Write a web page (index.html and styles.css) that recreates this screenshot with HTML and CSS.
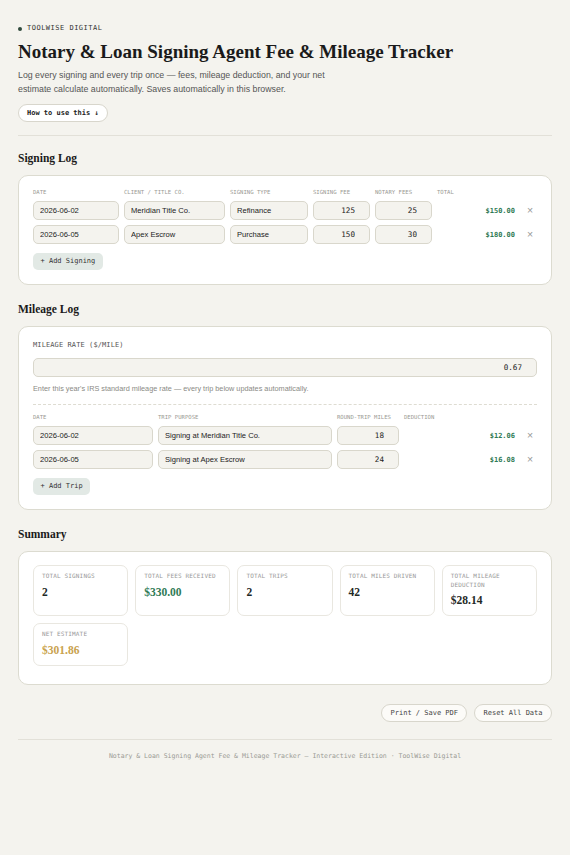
FILE: index.html
```html
<!DOCTYPE html>
<html lang="en">
<head>
  <meta charset="UTF-8">
  <meta name="viewport" content="width=device-width, initial-scale=1.0">
  <title>Notary &amp; Loan Signing Agent Fee &amp; Mileage Tracker</title>
  <link rel="stylesheet" href="styles.css">
</head>
<body>
  <div class="page">
    <header>
      <div class="eyebrow"><span class="dot"></span>TOOLWISE DIGITAL</div>
      <h1>Notary &amp; Loan Signing Agent Fee &amp; Mileage Tracker</h1>
      <p class="intro">Log every signing and every trip once — fees, mileage deduction, and your net estimate calculate automatically. Saves automatically in this browser.</p>
      <button class="how-btn">How to use this ↓</button>
    </header>

    <hr class="rule">

    <section class="section first">
      <h2>Signing Log</h2>
      <div class="card">
        <div class="log-grid signings">
          <div class="col-head">Date</div>
          <div class="col-head">Client / Title Co.</div>
          <div class="col-head">Signing Type</div>
          <div class="col-head">Signing Fee</div>
          <div class="col-head">Notary Fees</div>
          <div class="col-head">Total</div>
          <div></div>

          <input class="field" type="text" value="2026-06-02">
          <input class="field" type="text" value="Meridian Title Co.">
          <input class="field" type="text" value="Refinance">
          <input class="field num" type="text" value="125">
          <input class="field num" type="text" value="25">
          <div class="line-total">$150.00</div>
          <button class="remove">×</button>

          <input class="field" type="text" value="2026-06-05">
          <input class="field" type="text" value="Apex Escrow">
          <input class="field" type="text" value="Purchase">
          <input class="field num" type="text" value="150">
          <input class="field num" type="text" value="30">
          <div class="line-total">$180.00</div>
          <button class="remove">×</button>
        </div>
        <button class="add-btn">+ Add Signing</button>
      </div>
    </section>

    <section class="section">
      <h2>Mileage Log</h2>
      <div class="card">
        <label class="rate-label" for="rate">MILEAGE RATE ($/MILE)</label>
        <input class="field num rate" id="rate" type="text" value="0.67">
        <p class="helper">Enter this year's IRS standard mileage rate — every trip below updates automatically.</p>
        <div class="divider"></div>
        <div class="log-grid trips">
          <div class="col-head">Date</div>
          <div class="col-head">Trip Purpose</div>
          <div class="col-head">Round-Trip Miles</div>
          <div class="col-head">Deduction</div>
          <div></div>

          <input class="field" type="text" value="2026-06-02">
          <input class="field" type="text" value="Signing at Meridian Title Co.">
          <input class="field num" type="text" value="18">
          <div class="line-total">$12.06</div>
          <button class="remove">×</button>

          <input class="field" type="text" value="2026-06-05">
          <input class="field" type="text" value="Signing at Apex Escrow">
          <input class="field num" type="text" value="24">
          <div class="line-total">$16.08</div>
          <button class="remove">×</button>
        </div>
        <button class="add-btn">+ Add Trip</button>
      </div>
    </section>

    <section class="section">
      <h2>Summary</h2>
      <div class="card summary">
        <div class="stats">
          <div class="stat">
            <div class="stat-label">TOTAL SIGNINGS</div>
            <div class="stat-value">2</div>
          </div>
          <div class="stat">
            <div class="stat-label">TOTAL FEES RECEIVED</div>
            <div class="stat-value green">$330.00</div>
          </div>
          <div class="stat">
            <div class="stat-label">TOTAL TRIPS</div>
            <div class="stat-value">2</div>
          </div>
          <div class="stat">
            <div class="stat-label">TOTAL MILES DRIVEN</div>
            <div class="stat-value">42</div>
          </div>
          <div class="stat">
            <div class="stat-label">TOTAL MILEAGE DEDUCTION</div>
            <div class="stat-value">$28.14</div>
          </div>
          <div class="stat">
            <div class="stat-label">NET ESTIMATE</div>
            <div class="stat-value gold">$301.86</div>
          </div>
        </div>
      </div>
    </section>

    <div class="actions">
      <button class="pill">Print / Save PDF</button>
      <button class="pill">Reset All Data</button>
    </div>

    <hr class="rule footer-rule">
    <footer>Notary &amp; Loan Signing Agent Fee &amp; Mileage Tracker — Interactive Edition · ToolWise Digital</footer>
  </div>
</body>
</html>
```

FILE: styles.css
```css
body {
  margin: 0;
  background: #f4f3ee;
  font-family: "Liberation Sans", Arial, sans-serif;
  color: #1a1a1a;
}
.page {
  max-width: 534px;
  margin: 0 auto;
  padding: 24px 18px 40px;
}
.eyebrow {
  display: flex;
  align-items: center;
  gap: 5px;
  font: 7px/9px "DejaVu Sans Mono", monospace;
  letter-spacing: 0.5px;
  color: #333;
}
.dot {
  width: 4px;
  height: 4px;
  border-radius: 50%;
  background: #2f4a3c;
}
h1 {
  margin: 7px 0 0;
  font: bold 19px/23px "Liberation Serif", serif;
}
.intro {
  max-width: 330px;
  margin: 5px 0 0;
  font-size: 8.8px;
  line-height: 14px;
  color: #555;
}
.how-btn {
  margin-top: 8px;
  height: 18px;
  padding: 0 8px;
  border: 1px solid #d8d6cc;
  border-radius: 999px;
  background: #fff;
  font: bold 7px "DejaVu Sans Mono", monospace;
  color: #222;
  cursor: pointer;
}
.rule {
  margin: 13px 0 0;
  border: 0;
  border-top: 1px solid #e2e0d8;
}
.section {
  margin-top: 17.5px;
}
.section.first {
  margin-top: 15px;
}
h2 {
  margin: 0 0 10px;
  font: bold 11.5px/14px "Liberation Serif", serif;
}
.card {
  background: #fff;
  border: 1px solid #dcdbd0;
  border-radius: 10px;
  padding: 13px 14px 14px;
}
.card.summary {
  padding-bottom: 18.5px;
}
.log-grid {
  display: grid;
  gap: 5px;
  align-items: center;
}
.signings {
  grid-template-columns: 86px 101px 78px 57px 57px 1fr 14px;
}
.trips {
  grid-template-columns: 120px 174px 62px 1fr 14px;
}
.col-head {
  font: 5.6px/7px "DejaVu Sans Mono", monospace;
  text-transform: uppercase;
  color: #9a9a94;
}
.field {
  box-sizing: border-box;
  width: 100%;
  height: 19px;
  padding: 0 6px;
  border: 1px solid #d9d7cc;
  border-radius: 5px;
  background: #f4f3ee;
  font: 7.6px "Liberation Sans", Arial, sans-serif;
  color: #222;
}
.field.num {
  text-align: right;
  padding-right: 14px;
  font-family: "DejaVu Sans Mono", monospace;
}
.line-total {
  text-align: right;
  padding-right: 3px;
  font: bold 7px "DejaVu Sans Mono", monospace;
  color: #2f7a55;
}
.remove {
  padding: 0;
  border: 0;
  background: none;
  font: 10.5px/1 "Liberation Sans", Arial, sans-serif;
  color: #999;
  cursor: pointer;
}
.add-btn {
  display: block;
  margin-top: 8.5px;
  height: 17px;
  padding: 0 7.5px;
  border: 0;
  border-radius: 5px;
  background: #e2e9e5;
  font: 7px "DejaVu Sans Mono", monospace;
  color: #333;
  cursor: pointer;
}
.rate-label {
  display: block;
  font: 7px/10px "DejaVu Sans Mono", monospace;
  letter-spacing: 0.1px;
  color: #555;
}
.field.rate {
  margin-top: 7.5px;
}
.helper {
  margin: 7.5px 0 0;
  font-size: 7.3px;
  line-height: 9px;
  color: #8a8a85;
}
.divider {
  margin: 10.5px 0 9.5px;
  border-top: 1px dashed #dedcd2;
}
.stats {
  display: grid;
  grid-template-columns: repeat(5, 1fr);
  gap: 7px;
}
.stat {
  border: 1px solid #e9e7e0;
  border-radius: 7px;
  padding: 6px 8px 8px;
}
.stat-label {
  font: 6px/8.6px "DejaVu Sans Mono", monospace;
  letter-spacing: 0.15px;
  color: #999;
}
.stat-value {
  margin-top: 4px;
  font: bold 11.5px/14px "Liberation Serif", serif;
  color: #1f2a26;
}
.stat-value.green {
  color: #2f7a55;
}
.stat-value.gold {
  color: #c9a24e;
}
.actions {
  display: flex;
  justify-content: flex-end;
  gap: 6.5px;
  margin-top: 18.5px;
}
.pill {
  height: 18px;
  padding: 0 8.5px;
  border: 1px solid #d8d6cc;
  border-radius: 999px;
  background: #fcfbf8;
  font: 7px "DejaVu Sans Mono", monospace;
  color: #444;
  cursor: pointer;
}
.footer-rule {
  margin-top: 17px;
}
footer {
  margin-top: 12px;
  text-align: center;
  font: 6.5px/9px "DejaVu Sans Mono", monospace;
  color: #9a9a94;
}
```
